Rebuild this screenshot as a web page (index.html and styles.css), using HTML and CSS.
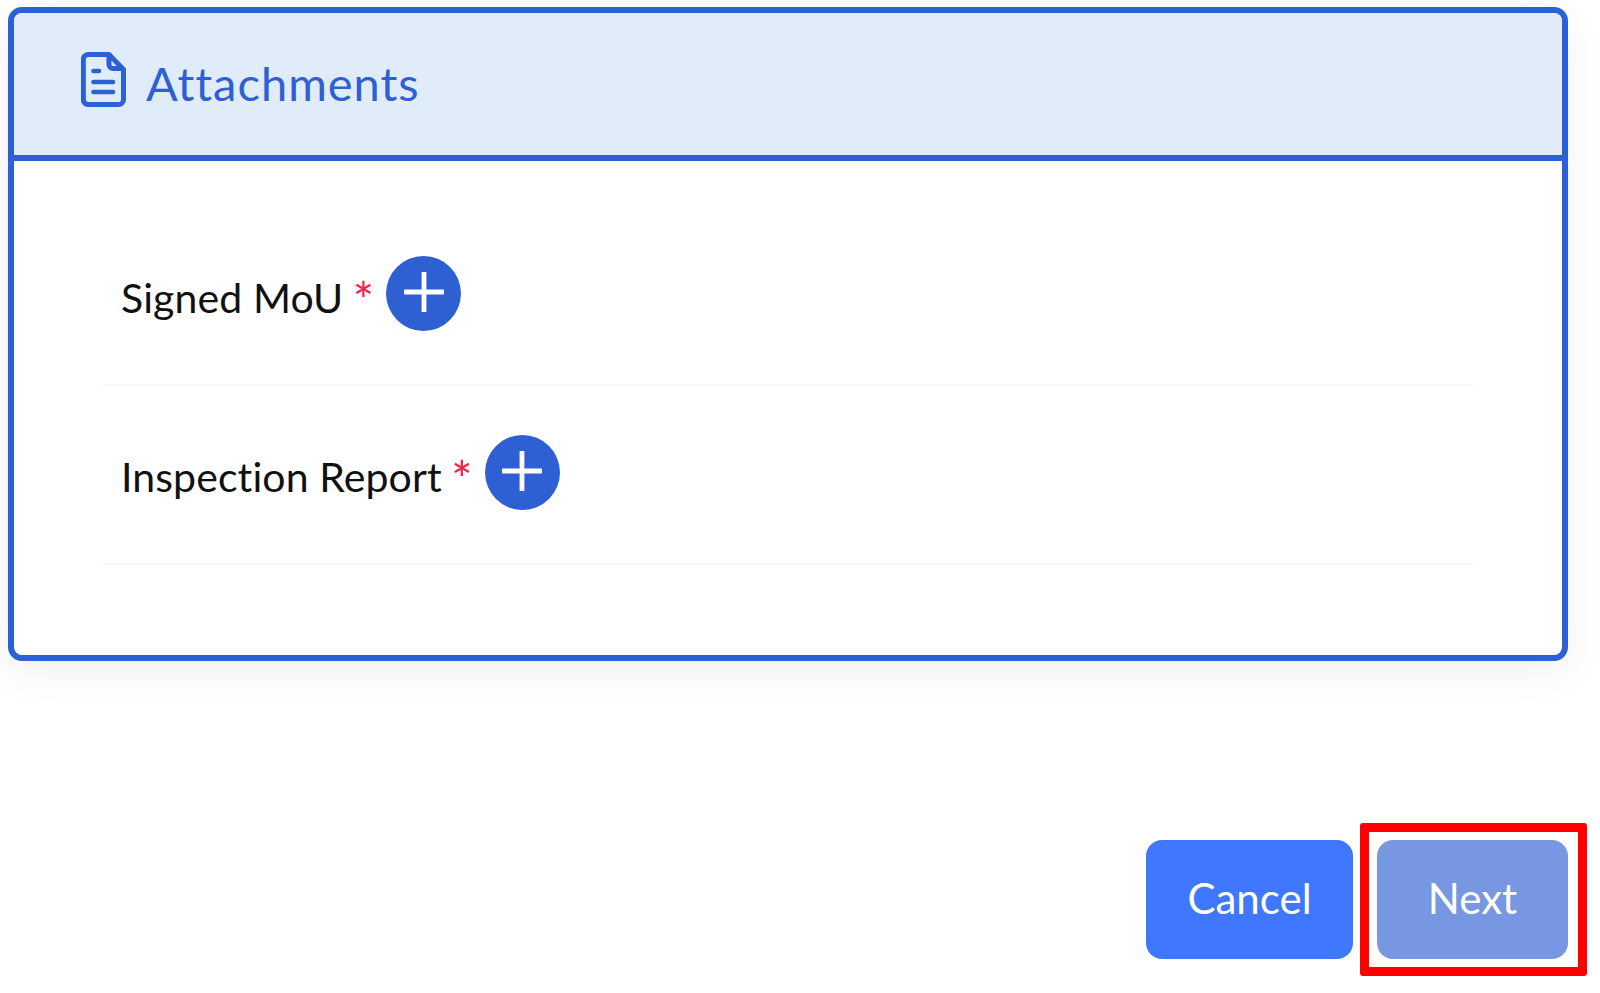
FILE: index.html
```html
<!doctype html>
<html lang="en">
  <head>
    <meta charset="utf-8">
    <meta name="viewport" content="width=device-width, initial-scale=1">
    <title>Attachments</title>
    <link rel="stylesheet" href="styles.css">
  </head>
  <body>
    <div class="card">
      <div class="card-header">
        <svg class="doc-icon" width="45" height="55" viewBox="0 0 45 55" fill="none">
          <path d="M7 2.5H28L42.5 17.5V47.5A5 5 0 0 1 37.5 52.5H7A5 5 0 0 1 2.3 47.5V7.5A5 5 0 0 1 7 2.5Z" stroke="#2b60d6" stroke-width="5" stroke-linejoin="round"/>
          <path d="M28 2.5V12.5A4 4 0 0 0 32 16.5H42.5" stroke="#2b60d6" stroke-width="5" stroke-linejoin="round"/>
          <path d="M12.5 19H18M12.5 30H32M12.5 40H32" stroke="#2b60d6" stroke-width="4.6" stroke-linecap="round"/>
        </svg>
        <h2>Attachments</h2>
      </div>
      <div class="card-body">
        <div class="attach-row">
          <span class="attach-label">Signed MoU <span class="required">*</span></span>
          <button class="add-btn" aria-label="Add Signed MoU">
            <svg width="40" height="40" viewBox="0 0 40 40" fill="none"><path d="M20 1V39M1 20H39" stroke="#fff" stroke-width="4.8" stroke-linecap="round"/></svg>
          </button>
        </div>
        <div class="attach-row">
          <span class="attach-label">Inspection Report <span class="required">*</span></span>
          <button class="add-btn" aria-label="Add Inspection Report">
            <svg width="40" height="40" viewBox="0 0 40 40" fill="none"><path d="M20 1V39M1 20H39" stroke="#fff" stroke-width="4.8" stroke-linecap="round"/></svg>
          </button>
        </div>
      </div>
    </div>

    <div class="actions">
      <button class="btn btn-cancel">Cancel</button>
      <div class="highlight">
        <button class="btn btn-next">Next</button>
      </div>
    </div>
  </body>
</html>
```

FILE: styles.css
```css
/* Reset */
* {
  margin: 0;
  padding: 0;
  box-sizing: border-box;
}

body {
  background-color: #fff;
  font-family: "Lato", "Noto Sans", sans-serif;
  padding: 7px 32px 0 8px;
  overflow: hidden;
}

/* Card */
.card {
  height: 654px;
  border: 6px solid #2b60d6;
  border-radius: 14px;
  background-color: #fff;
  box-shadow: 0 12px 40px rgba(0, 0, 0, 0.06);
}

.card-header {
  display: flex;
  align-items: center;
  gap: 20px;
  height: 148px;
  padding-left: 67px;
  padding-bottom: 10px;
  background-color: #e0ecf9;
  border-bottom: 6px solid #2b60d6;
  border-radius: 8px 8px 0 0;
}

.card-header h2 {
  font-size: 47px;
  font-weight: 400;
  letter-spacing: 1px;
  color: #2f60d3;
  padding-top: 8px;
}

.card-body {
  padding: 46px 89px 0 89px;
}

/* Attachment rows */
.attach-row {
  display: flex;
  align-items: flex-start;
  gap: 12px;
  padding: 49px 0 53px 18px;
  border-bottom: 2px solid #f8f8f8;
}

.attach-label {
  font-size: 41px;
  line-height: 48px;
  letter-spacing: 0.1px;
  color: #111;
  padding-top: 18px;
}

.required {
  font-size: 50px;
  line-height: 1;
  margin-left: -1px;
  vertical-align: -6px;
  color: #f5204a;
}

.add-btn {
  display: flex;
  align-items: center;
  justify-content: center;
  width: 75px;
  height: 75px;
  padding-bottom: 3px;
  border: none;
  border-radius: 50%;
  background-color: #2f60d3;
}

/* Bottom buttons */
.actions {
  display: flex;
  justify-content: flex-end;
  align-items: center;
  gap: 7px;
  margin-top: 162px;
  margin-right: -19px;
}

.btn {
  height: 119px;
  border: none;
  border-radius: 16px;
  padding-bottom: 4px;
  font-family: inherit;
  font-size: 42px;
  color: #fff;
}

.btn-cancel {
  width: 207px;
  background-color: #3f78ff;
}

.btn-next {
  display: block;
  width: 191px;
  background-color: #7897e2;
}

/* Red box marking the Next button */
.highlight {
  border: 9px solid #ff0000;
  border-radius: 3px;
  padding: 8px 10px 8px 8px;
}
```
